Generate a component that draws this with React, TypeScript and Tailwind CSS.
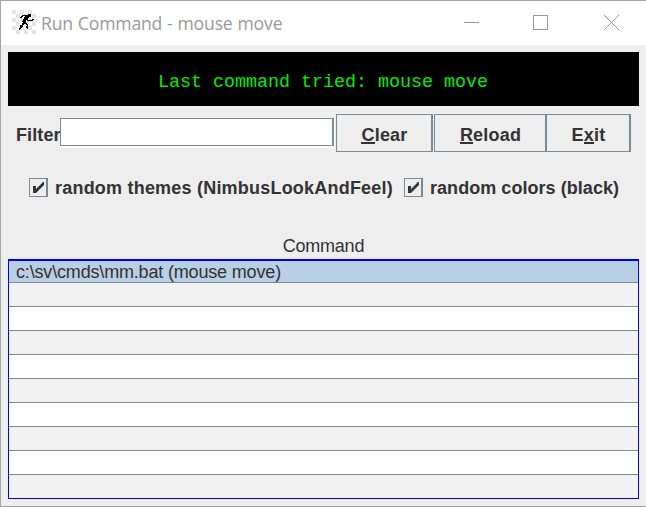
import React from "react";

const emptyRows = Array.from({ length: 9 }, (_, i) => i);

function Check({ label, className, textClass }: { label: string; className: string; textClass: string }) {
  return (
    <label className={`flex h-[19px] items-center ${className}`}>
      <span className="mr-[7px] block h-[19px] w-[19px] shrink-0 border border-r-2 border-[#7a8a99]">
        <svg width="16" height="17" viewBox="0 0 16 17">
          <path d="M3 7h3v3L13 3h1v3L6 14H3z" fill="#333" />
        </svg>
      </span>
      <span className={`pt-[2px] ${textClass}`}>{label}</span>
    </label>
  );
}

function Button({ before, hot, after, className }: { before: string; hot: string; after: string; className: string }) {
  return (
    <button className={`flex h-[38px] items-center justify-center border border-r-2 border-[#7a8a99] pl-px pt-[3px] leading-5 ${className}`}>
      <span>
        {before}
        <span className="inline-block h-[19px] border-b-2 border-[#333] leading-5">{hot}</span>
        {after}
      </span>
    </button>
  );
}

export default function App() {
  return (
    <div className="flex h-[507px] w-[646px] flex-col overflow-hidden whitespace-nowrap border-y border-l border-[#a5a5a5] bg-[#eee] font-['Liberation_Sans',Arial,sans-serif] text-[18px] text-[#333]">
      <header className="flex h-11 shrink-0 items-start bg-white">
        <svg className="ml-[11px] mt-[9px] shrink-0" width="24" height="24" viewBox="0 0 24 24" shapeRendering="crispEdges">
          <defs>
            <pattern id="checks" width="8" height="8" patternUnits="userSpaceOnUse">
              <path d="M0 0h4v4h4v4H4V4H0z" fill="#e4e4e4" />
            </pattern>
          </defs>
          <rect width="24" height="24" fill="url(#checks)" />
          <rect x="16" y="4" width="3" height="3" fill="#000" />
          <g fill="none" stroke="#000">
            <path d="M8 7.5h1l1.500-2h4l3 2" strokeWidth="1.500" />
            <path d="M14.500 6.500l-3 6" strokeWidth="3.500" />
            <path d="M15.500 8v2.500h3.500l3-1" strokeWidth="1.500" />
            <path d="M12 12.500l3.500 2-.5 4M12 12l-1.500 3.500h-3M10.500 15.500L7 19.500" strokeWidth="1.700" />
          </g>
        </svg>
        <h1 className="ml-[5px] mt-[10px] w-[401px] shrink-0 font-['Open_Sans','Noto_Sans',sans-serif] text-[17.6px] leading-6 tracking-[-0.17px] text-[#999] [word-spacing:0.5px]">Run Command - mouse move</h1>
        <svg className="ml-[21px] mt-[13px] shrink-0" width="160" height="16" viewBox="0 0 160 16" fill="none" stroke="#999" shapeRendering="crispEdges">
          <path d="M1 8.5h15M70.5 1.5h14v14h-14z" />
          <path d="M141 1l15 15M156 1l-15 15" shapeRendering="auto" />
        </svg>
      </header>
      <main className="flex flex-col px-[7px] pt-[7px]">
        <div className="h-[54px] bg-black pl-[150px] pt-[21px] font-['Liberation_Mono','Courier_New',monospace] text-[18.33px] leading-5 text-[#00ee00]">Last command tried: mouse move</div>
        <div className="flex pt-2 font-bold">
          <label className="w-[52px] shrink-0 pl-2 pt-[11px] leading-5 tracking-[0.1px]">Filter</label>
          <div className="mt-1 h-[30px] w-[275px] shrink-0 border-b-2 border-r border-white">
            <input aria-label="Filter" className="block h-[28px] w-[274px] border border-r-2 border-[#7a8a99] bg-white outline-none" />
          </div>
          <Button before="" hot="C" after="lear" className="ml-px w-[97px] tracking-[0.2px]" />
          <Button before="" hot="R" after="eload" className="ml-px w-[113px] tracking-[0.2px]" />
          <Button before="E" hot="x" after="it" className="-ml-px w-[85px] tracking-[0.2px]" />
        </div>
        <div className="flex pt-[26px] font-bold">
          <Check label="random themes (NimbusLookAndFeel)" className="ml-[21px] w-[375px]" textClass="tracking-[0.21px]" />
          <Check label="random colors (black)" className="" textClass="tracking-[0.05px]" />
        </div>
        <div className="mt-[37px] h-[25px] text-center leading-6 tracking-[-0.25px]">Command</div>
        <div className="h-[240px] border border-t-2 border-[#00f]">
          <div className="h-[22px] border-b border-[#7a8a99] bg-[#b8cfe5] pl-[7px] leading-[22px] tracking-[-0.17px]">c:\sv\cmds\mm.bat (mouse move)</div>
          {emptyRows.map((i) => (
            <div key={i} className="h-6 border-b border-[#7a8a99] odd:bg-white even:bg-[#f2f2f2] last:h-[23px] last:border-b-0" />
          ))}
        </div>
      </main>
    </div>
  );
}
